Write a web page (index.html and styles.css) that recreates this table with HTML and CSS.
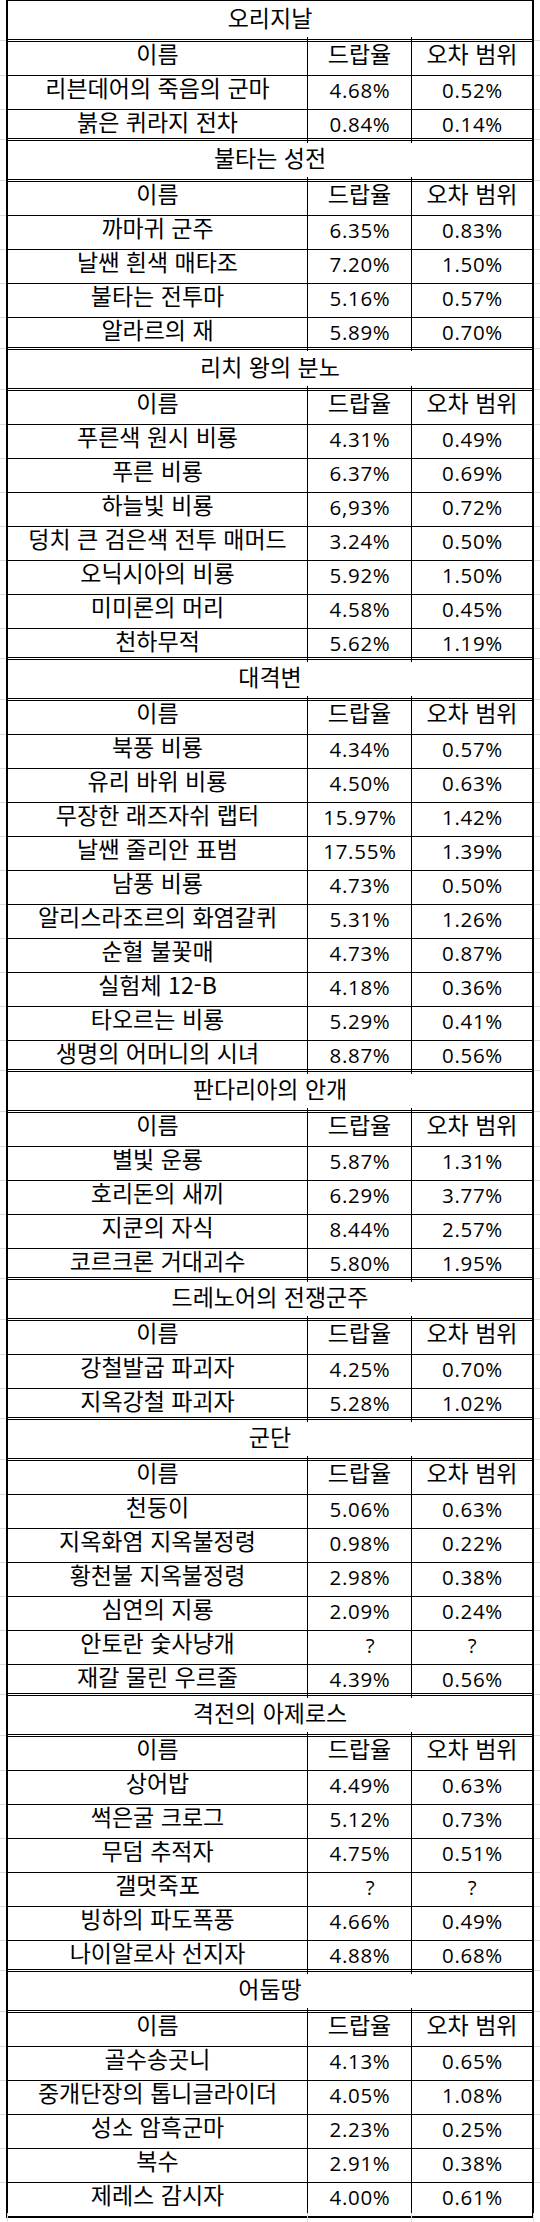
FILE: index.html
```html
<!DOCTYPE html>
<html lang="ko">
<head>
<meta charset="utf-8">
<title>탈것 드랍율</title>
<link rel="stylesheet" href="styles.css">
</head>
<body>
<div class="sheet">

  <div class="r t first"><i class="g"></i><div class="m"><div class="c ko">오리지날</div></div><i class="g"></i></div>
  <div class="r"><i class="g"></i><div class="m"><div class="c ko">이름</div><div class="c ko">드랍율</div><div class="c ko">오차 범위</div></div><i class="g"></i></div>
  <div class="r"><i class="g"></i><div class="m"><div class="c ko">리븐데어의 죽음의 군마</div><div class="c num">4.68%</div><div class="c num">0.52%</div></div><i class="g"></i></div>
  <div class="r last"><i class="g"></i><div class="m"><div class="c ko">붉은 퀴라지 전차</div><div class="c num">0.84%</div><div class="c num">0.14%</div></div><i class="g"></i></div>

  <div class="r t"><i class="g"></i><div class="m"><div class="c ko">불타는 성전</div></div><i class="g"></i></div>
  <div class="r"><i class="g"></i><div class="m"><div class="c ko">이름</div><div class="c ko">드랍율</div><div class="c ko">오차 범위</div></div><i class="g"></i></div>
  <div class="r"><i class="g"></i><div class="m"><div class="c ko">까마귀 군주</div><div class="c num">6.35%</div><div class="c num">0.83%</div></div><i class="g"></i></div>
  <div class="r"><i class="g"></i><div class="m"><div class="c ko">날쌘 흰색 매타조</div><div class="c num">7.20%</div><div class="c num">1.50%</div></div><i class="g"></i></div>
  <div class="r"><i class="g"></i><div class="m"><div class="c ko">불타는 전투마</div><div class="c num">5.16%</div><div class="c num">0.57%</div></div><i class="g"></i></div>
  <div class="r last tall"><i class="g"></i><div class="m"><div class="c ko">알라르의 재</div><div class="c num">5.89%</div><div class="c num">0.70%</div></div><i class="g"></i></div>

  <div class="r t"><i class="g"></i><div class="m"><div class="c ko">리치 왕의 분노</div></div><i class="g"></i></div>
  <div class="r"><i class="g"></i><div class="m"><div class="c ko">이름</div><div class="c ko">드랍율</div><div class="c ko">오차 범위</div></div><i class="g"></i></div>
  <div class="r"><i class="g"></i><div class="m"><div class="c ko">푸른색 원시 비룡</div><div class="c num">4.31%</div><div class="c num">0.49%</div></div><i class="g"></i></div>
  <div class="r"><i class="g"></i><div class="m"><div class="c ko">푸른 비룡</div><div class="c num">6.37%</div><div class="c num">0.69%</div></div><i class="g"></i></div>
  <div class="r"><i class="g"></i><div class="m"><div class="c ko">하늘빛 비룡</div><div class="c num">6,93%</div><div class="c num">0.72%</div></div><i class="g"></i></div>
  <div class="r"><i class="g"></i><div class="m"><div class="c ko">덩치 큰 검은색 전투 매머드</div><div class="c num">3.24%</div><div class="c num">0.50%</div></div><i class="g"></i></div>
  <div class="r"><i class="g"></i><div class="m"><div class="c ko">오닉시아의 비룡</div><div class="c num">5.92%</div><div class="c num">1.50%</div></div><i class="g"></i></div>
  <div class="r"><i class="g"></i><div class="m"><div class="c ko">미미론의 머리</div><div class="c num">4.58%</div><div class="c num">0.45%</div></div><i class="g"></i></div>
  <div class="r last"><i class="g"></i><div class="m"><div class="c ko">천하무적</div><div class="c num">5.62%</div><div class="c num">1.19%</div></div><i class="g"></i></div>

  <div class="r t"><i class="g"></i><div class="m"><div class="c ko">대격변</div></div><i class="g"></i></div>
  <div class="r"><i class="g"></i><div class="m"><div class="c ko">이름</div><div class="c ko">드랍율</div><div class="c ko">오차 범위</div></div><i class="g"></i></div>
  <div class="r"><i class="g"></i><div class="m"><div class="c ko">북풍 비룡</div><div class="c num">4.34%</div><div class="c num">0.57%</div></div><i class="g"></i></div>
  <div class="r"><i class="g"></i><div class="m"><div class="c ko">유리 바위 비룡</div><div class="c num">4.50%</div><div class="c num">0.63%</div></div><i class="g"></i></div>
  <div class="r"><i class="g"></i><div class="m"><div class="c ko">무장한 래즈자쉬 랩터</div><div class="c num">15.97%</div><div class="c num">1.42%</div></div><i class="g"></i></div>
  <div class="r"><i class="g"></i><div class="m"><div class="c ko">날쌘 줄리안 표범</div><div class="c num">17.55%</div><div class="c num">1.39%</div></div><i class="g"></i></div>
  <div class="r"><i class="g"></i><div class="m"><div class="c ko">남풍 비룡</div><div class="c num">4.73%</div><div class="c num">0.50%</div></div><i class="g"></i></div>
  <div class="r"><i class="g"></i><div class="m"><div class="c ko">알리스라조르의 화염갈퀴</div><div class="c num">5.31%</div><div class="c num">1.26%</div></div><i class="g"></i></div>
  <div class="r"><i class="g"></i><div class="m"><div class="c ko">순혈 불꽃매</div><div class="c num">4.73%</div><div class="c num">0.87%</div></div><i class="g"></i></div>
  <div class="r"><i class="g"></i><div class="m"><div class="c ko">실험체 12-B</div><div class="c num">4.18%</div><div class="c num">0.36%</div></div><i class="g"></i></div>
  <div class="r"><i class="g"></i><div class="m"><div class="c ko">타오르는 비룡</div><div class="c num">5.29%</div><div class="c num">0.41%</div></div><i class="g"></i></div>
  <div class="r last"><i class="g"></i><div class="m"><div class="c ko">생명의 어머니의 시녀</div><div class="c num">8.87%</div><div class="c num">0.56%</div></div><i class="g"></i></div>

  <div class="r t"><i class="g"></i><div class="m"><div class="c ko">판다리아의 안개</div></div><i class="g"></i></div>
  <div class="r"><i class="g"></i><div class="m"><div class="c ko">이름</div><div class="c ko">드랍율</div><div class="c ko">오차 범위</div></div><i class="g"></i></div>
  <div class="r"><i class="g"></i><div class="m"><div class="c ko">별빛 운룡</div><div class="c num">5.87%</div><div class="c num">1.31%</div></div><i class="g"></i></div>
  <div class="r"><i class="g"></i><div class="m"><div class="c ko">호리돈의 새끼</div><div class="c num">6.29%</div><div class="c num">3.77%</div></div><i class="g"></i></div>
  <div class="r"><i class="g"></i><div class="m"><div class="c ko">지쿤의 자식</div><div class="c num">8.44%</div><div class="c num">2.57%</div></div><i class="g"></i></div>
  <div class="r last"><i class="g"></i><div class="m"><div class="c ko">코르크론 거대괴수</div><div class="c num">5.80%</div><div class="c num">1.95%</div></div><i class="g"></i></div>

  <div class="r t"><i class="g"></i><div class="m"><div class="c ko">드레노어의 전쟁군주</div></div><i class="g"></i></div>
  <div class="r"><i class="g"></i><div class="m"><div class="c ko">이름</div><div class="c ko">드랍율</div><div class="c ko">오차 범위</div></div><i class="g"></i></div>
  <div class="r"><i class="g"></i><div class="m"><div class="c ko">강철발굽 파괴자</div><div class="c num">4.25%</div><div class="c num">0.70%</div></div><i class="g"></i></div>
  <div class="r last"><i class="g"></i><div class="m"><div class="c ko">지옥강철 파괴자</div><div class="c num">5.28%</div><div class="c num">1.02%</div></div><i class="g"></i></div>

  <div class="r t"><i class="g"></i><div class="m"><div class="c ko">군단</div></div><i class="g"></i></div>
  <div class="r"><i class="g"></i><div class="m"><div class="c ko">이름</div><div class="c ko">드랍율</div><div class="c ko">오차 범위</div></div><i class="g"></i></div>
  <div class="r"><i class="g"></i><div class="m"><div class="c ko">천둥이</div><div class="c num">5.06%</div><div class="c num">0.63%</div></div><i class="g"></i></div>
  <div class="r"><i class="g"></i><div class="m"><div class="c ko">지옥화염 지옥불정령</div><div class="c num">0.98%</div><div class="c num">0.22%</div></div><i class="g"></i></div>
  <div class="r"><i class="g"></i><div class="m"><div class="c ko">황천불 지옥불정령</div><div class="c num">2.98%</div><div class="c num">0.38%</div></div><i class="g"></i></div>
  <div class="r"><i class="g"></i><div class="m"><div class="c ko">심연의 지룡</div><div class="c num">2.09%</div><div class="c num">0.24%</div></div><i class="g"></i></div>
  <div class="r"><i class="g"></i><div class="m"><div class="c ko">안토란 숯사냥개</div><div class="c num q">?</div><div class="c num">?</div></div><i class="g"></i></div>
  <div class="r last"><i class="g"></i><div class="m"><div class="c ko">재갈 물린 우르줄</div><div class="c num">4.39%</div><div class="c num">0.56%</div></div><i class="g"></i></div>

  <div class="r t"><i class="g"></i><div class="m"><div class="c ko">격전의 아제로스</div></div><i class="g"></i></div>
  <div class="r"><i class="g"></i><div class="m"><div class="c ko">이름</div><div class="c ko">드랍율</div><div class="c ko">오차 범위</div></div><i class="g"></i></div>
  <div class="r"><i class="g"></i><div class="m"><div class="c ko">상어밥</div><div class="c num">4.49%</div><div class="c num">0.63%</div></div><i class="g"></i></div>
  <div class="r"><i class="g"></i><div class="m"><div class="c ko">썩은굴 크로그</div><div class="c num">5.12%</div><div class="c num">0.73%</div></div><i class="g"></i></div>
  <div class="r"><i class="g"></i><div class="m"><div class="c ko">무덤 추적자</div><div class="c num">4.75%</div><div class="c num">0.51%</div></div><i class="g"></i></div>
  <div class="r"><i class="g"></i><div class="m"><div class="c ko">갤멋죽포</div><div class="c num q">?</div><div class="c num">?</div></div><i class="g"></i></div>
  <div class="r"><i class="g"></i><div class="m"><div class="c ko">빙하의 파도폭풍</div><div class="c num">4.66%</div><div class="c num">0.49%</div></div><i class="g"></i></div>
  <div class="r last"><i class="g"></i><div class="m"><div class="c ko">나이알로사 선지자</div><div class="c num">4.88%</div><div class="c num">0.68%</div></div><i class="g"></i></div>

  <div class="r t"><i class="g"></i><div class="m"><div class="c ko">어둠땅</div></div><i class="g"></i></div>
  <div class="r"><i class="g"></i><div class="m"><div class="c ko">이름</div><div class="c ko">드랍율</div><div class="c ko">오차 범위</div></div><i class="g"></i></div>
  <div class="r"><i class="g"></i><div class="m"><div class="c ko">골수송곳니</div><div class="c num">4.13%</div><div class="c num">0.65%</div></div><i class="g"></i></div>
  <div class="r"><i class="g"></i><div class="m"><div class="c ko">중개단장의 톱니글라이더</div><div class="c num">4.05%</div><div class="c num">1.08%</div></div><i class="g"></i></div>
  <div class="r"><i class="g"></i><div class="m"><div class="c ko">성소 암흑군마</div><div class="c num">2.23%</div><div class="c num">0.25%</div></div><i class="g"></i></div>
  <div class="r"><i class="g"></i><div class="m"><div class="c ko">복수</div><div class="c num">2.91%</div><div class="c num">0.38%</div></div><i class="g"></i></div>
  <div class="r end"><i class="g"></i><div class="m"><div class="c ko">제레스 감시자</div><div class="c num">4.00%</div><div class="c num">0.61%</div></div><i class="g"></i></div>

  <div class="tail"><span class="tl a"></span><span class="tl b"></span><span class="tl c2"></span><span class="tl d"></span><span class="tl e"></span></div>
</div>
</body>
</html>
```

FILE: styles.css
```css
* {
  box-sizing: border-box;
  margin: 0;
  padding: 0;
}

html, body {
  background: #ffffff;
}

body {
  margin: 0;
  width: 540px;
  font-family: "Noto Sans CJK KR", sans-serif;
  color: #000000;
}

.sheet {
  display: flex;
  flex-direction: column;
}

/* a sheet row: gutter | table part | gutter */
.r {
  display: grid;
  grid-template-columns: 6px 528px 6px;
  height: 34px;
}

/* faint spreadsheet gridlines outside the table */
.g {
  display: block;
  background: linear-gradient(#d6d8e2, #d6d8e2) 0 100% / 100% 1px no-repeat;
}

.m {
  display: grid;
  grid-template-columns: 300px 104px 120px;
  border-left: 2px solid #000;
  border-right: 2px solid #000;
  border-bottom: 1px solid #000;
}

.c {
  display: flex;
  align-items: center;
  justify-content: center;
  border-right: 1px solid #000;
  white-space: nowrap;
  overflow: hidden;
}

.c:last-child {
  border-right: 0;
}

.ko {
  font-family: "Noto Sans CJK KR", sans-serif;
  font-size: 23px;
  line-height: 33px;
  padding-bottom: 5px;
}

.num {
  font-family: "Open Sans", "Noto Sans CJK KR", sans-serif;
  font-size: 20.5px;
  letter-spacing: 0.7px;
  line-height: 33px;
  padding-left: 1px;
}

/* unknown rate marker sits right of centre in the rate column */
.num.q {
  padding-left: 22px;
}

/* section title rows: double rules above and below */
.t {
  height: 39px;
}

.t .m {
  grid-template-columns: 1fr;
  border-top: 3px double #000;
  border-bottom: 3px double #000;
}

.t .g {
  background:
    linear-gradient(#d6d8e2, #d6d8e2) 0 1px / 100% 1px no-repeat,
    linear-gradient(#d6d8e2, #d6d8e2) 0 calc(100% - 1px) / 100% 1px no-repeat;
}

.t.first {
  height: 37px;
}

.t.first .m {
  border-top: 1px solid #000;
}

.t.first .g {
  background: linear-gradient(#d6d8e2, #d6d8e2) 0 calc(100% - 1px) / 100% 1px no-repeat;
}

/* last row of a section: the next title's double rule closes it */
.last {
  height: 33px;
}

.last .m {
  border-bottom: 0;
}

.last .g {
  background: none;
}

.last.tall {
  height: 34px;
}

/* final row closes the table with a heavy rule */
.end {
  height: 35px;
}

.end .m {
  border-bottom: 2px solid #000;
}

.end .g {
  background: none;
}

/* gridlines continuing below the table */
.tail {
  display: flex;
  height: 9px;
}

.tl {
  display: block;
  height: 100%;
}

.tl.a { width: 7px; }
.tl.b { width: 300px; border-left: 1px solid #d6d8e2; }
.tl.c2 { width: 104px; border-left: 1px solid #d6d8e2; }
.tl.d { width: 122px; border-left: 1px solid #d6d8e2; }
.tl.e { flex: 1; border-left: 1px solid #d6d8e2; }
```
